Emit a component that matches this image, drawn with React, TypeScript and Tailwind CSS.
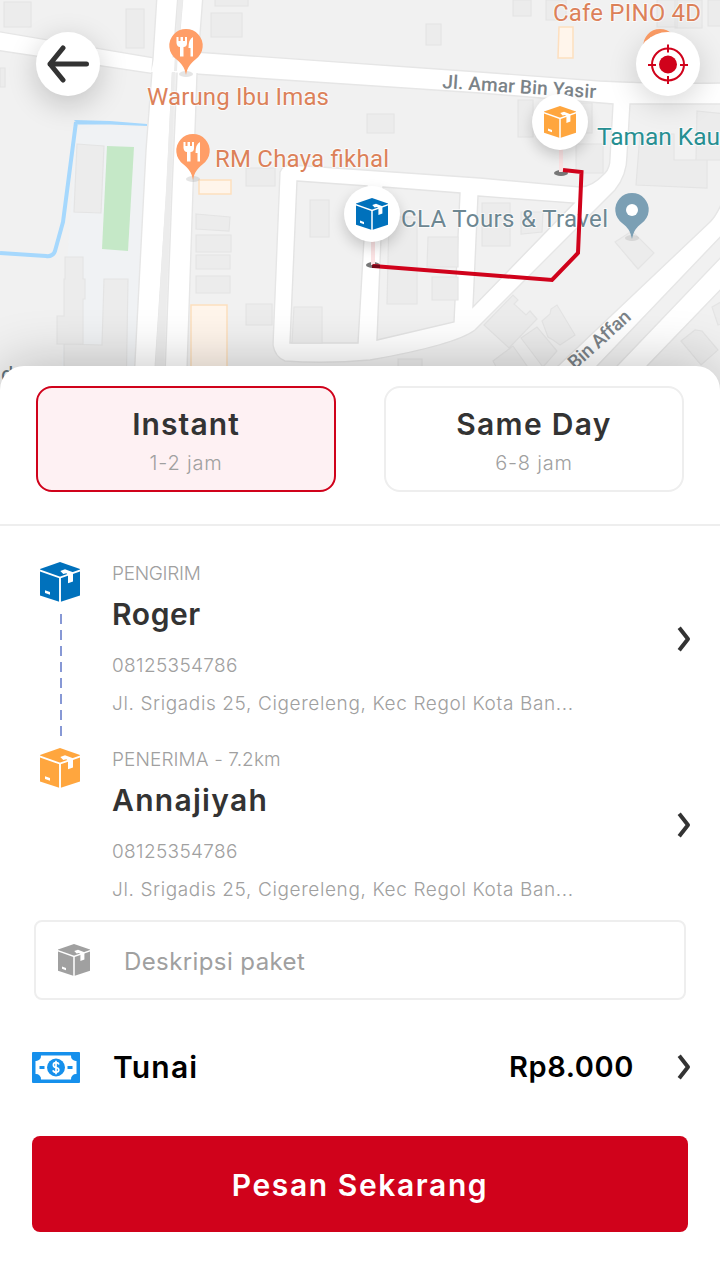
import React from "react";

type IconProps = { className?: string };

function BoxIcon({ className = "" }: IconProps) {
  return (
    <svg viewBox="0 0 40 40" className={className} fill="currentColor">
      <path d="M20 0 40 7V33.400L20 40 0 33.400V7z" />
      <path d="M-.5 8.300 20 15.600 40.500 8.300M20 15.600V41" fill="none" stroke="#fff" strokeWidth="1.900" />
      <path d="M20.300 8.900 25 7.300 33 10.300V19.400L28 21.200V12.500L26.300 11.300 23.300 12z" fill="#fff" />
      <path d="M5 28.200 10 30V32.800L5 31z" fill="#fff" />
    </svg>
  );
}

function Chevron() {
  return (
    <svg viewBox="0 0 14 26" className="h-[26px] w-[14px] shrink-0" fill="none" stroke="#333" strokeWidth="4">
      <path d="M2.200 1.800 11 13 2.200 24.200" strokeLinejoin="round" />
    </svg>
  );
}

function CashIcon() {
  return (
    <svg viewBox="0 0 48 31" className="h-[31px] w-12">
      <rect width="48" height="31" rx="1" fill="#1690ec" />
      <path d="M9 3.500H39A5 5 0 0 0 44.500 9V22A5 5 0 0 0 39 27.500H9A5 5 0 0 0 3.500 22V9A5 5 0 0 0 9 3.500z" fill="#fff" />
      <circle cx="24" cy="15.500" r="9" fill="#1690ec" />
      <path d="M7.500 14h5v3h-5zM35.500 14h5v3h-5z" fill="#1690ec" />
      <path d="M27 12.500C26.500 11 25.500 10.700 24 10.700 20.500 10.700 20.500 15 24 15.500 27.700 16 27.700 20.300 24 20.300 22.300 20.300 21.300 19.600 21 18.300M24 8.800V22.200" fill="none" stroke="#fff" strokeWidth="1.700" />
    </svg>
  );
}

function FoodPin({ x, y }: { x: number; y: number }) {
  return (
    <g transform={`translate(${x} ${y})`}>
      <ellipse cx="0" cy="45" rx="7" ry="3" fill="#999" opacity=".25" />
      <path d="M0 46C-1.500 38-4 35-10 30A16.700 16.700 0 1 1 10 30C4 35 1.500 38 0 46z" fill="#ff9e67" />
      <path d="M-9.500 8V14Q-9 18 -6 18V27.500H-2.500V18Q1 18 1 14V8H-1V12H-3V8H-5.500V12H-7.500V8zM7 8Q2.500 10 2.500 19H4.500V27.500H7z" fill="#fff" />
    </g>
  );
}

function CityMap() {
  return (
    <svg viewBox="0 0 720 400" className="block h-[400px] w-[720px]" fontFamily="Roboto, sans-serif">
      <rect width="720" height="400" fill="#f1f1f1" />
      <path d="M77 124 148 128 133 400H60L68 250z" fill="#f0f2f4" />
      <g fill="#ececec" stroke="#e4e4e4" strokeWidth="1.200">
        <path d="M4 2h27v25H4zM126 9h18v39h-18zM0 68h5v19H0zM215-5h33v11h-33zM211 13h31v24h-31zM426 24h15v21h-15zM367 114h27v19h-27zM246 168h29v18h-29z" />
        <path d="M77 144 104 146 101 213 74 212zM65 257h18v22h2v20h-2v45H57v-28h7v-37h1zM104 279h24l-2 121H64v-56l38 1z" />
        <path d="M196 214 230 217 229 231 196 229zM196 235h35v17h-35zM196 255h34v14h-34zM196 276h34v17h-34z" />
        <path d="M246 304h26v21h-26zM398 359h24v18h-24z" />
        <path d="M513 0h18v16h-18zM546 0h20v20h-20zM657 0h20v27h-20zM675 0h27v28h-27zM708 0h20v26h-20zM518 100h15v37h-15zM576 103h16v30h-16zM576 144h27v29h-27zM697 111 725 114V160H674V134H640L636 185 707 188V160H696z" />
        <path d="M615 242 632 231 654 253 638 269z" />
        <path d="M484 325 513 295 518 300 514 304 526 315 530 311 537 319 509 348zM542 321 550 314 551 309 557 305 575 335 560 345 553 340 548 337zM521 338 537 327 557 351 543 367zM493 361 513 346 527 366 505 384zM681 341 695 330 702 331 718 350 701 365zM712 307 728 298 734 321 718 325z" />
      </g>
      <path d="M107 146 134 147 128 251 102 249z" fill="#c5e8c7" />
      <path d="M0 253 46 256Q53 257 55 251L63 222 76 122" fill="none" stroke="#a6d8fd" strokeWidth="4" strokeLinejoin="round" />
      <path d="M74 120 110 121 147 124V126L110 124.500 78 124.500z" fill="#a6d8fd" />
      <g fill="#fff5eb" stroke="#fddfbf" strokeWidth="1.500">
        <path d="M199 180h32v14h-32zM191 305h36v85h-36zM559 27h14v31h-15z" />
      </g>
      <g fill="#fff" stroke="#e6e6e6" strokeWidth="1.400">
        <path d="M-5 31 155 58V74L-5 50z" />
        <path d="M195 52 480 72 600 81Q660 84 725 83V104H630L627 156Q627 175 615 190L475 330Q455 345 370 360 325 364 285 361 275 357 273 345L280 172Q282 165 292 165L480 178 580 187Q592 187 605 173 610 168 610 158L613 104 480 93 195 74z" />
        <path d="M157-5 153 58 146 150 133 400H153L167 190 173 60 178-5zM183-5 178 52 172 190 164 400H186L193 190 197 74 203-5z" />
        <path d="M558 366 710 222Q718 214 725 195V232L597 366 560 405H520zM617 366 725 253V285L647 366 610 402H580z" />
      </g>
      <path d="M154 60 199 54V73L151 72z" fill="#fff" />
      <path d="M178 0H183L178 52 177 71H174zM175 72 171 190 164 370H155L166 190 172 72z" fill="#ececec" />
      <g fill="#f1f1f1" stroke="#e4e4e4" strokeWidth="1.400">
        <path d="M297 181 367 186 358 343H290z" />
        <path d="M383 187 460 193 454 322 377 340z" />
        <path d="M478 196 574 203 473 307z" />
      </g>
      <g fill="#ececec" stroke="#e4e4e4" strokeWidth="1.200">
        <path d="M310 200h19v37h-19zM294 307h28v36h-30zM389 217h28v87h-30zM428 237h30v30h-31zM432 277h26v23h-26zM482 203h28v43h-28zM521 212h22l-1 20-21 2z" />
      </g>
      <g fontSize="24" fill="#dc8159" stroke="#fff" strokeOpacity=".7" strokeWidth="2" paintOrder="stroke" strokeLinejoin="round">
        <text x="147" y="105" textLength="182">Warung Ibu Imas</text>
        <text x="215" y="167" textLength="174">RM Chaya fikhal</text>
        <text x="553" y="21" textLength="148">Cafe PINO 4D</text>
        <text x="597" y="145" fill="#268f92" fontSize="24.500" textLength="123">Taman Kau</text>
        <text x="401" y="227" fill="#6d8792" textLength="207">CLA Tours &amp; Travel</text>
      </g>
      <g fill="#7b8388" fontSize="19" fontWeight="500">
        <text transform="translate(442 88) rotate(3.800)" textLength="154">Jl. Amar Bin Yasir</text>
        <text transform="translate(575 370) rotate(-42)" textLength="77">Bin Affan</text>
        <text x="1" y="382" fontSize="22" fontWeight="400" fill="#60737c">d d T</text>
      </g>
      <FoodPin x={186} y={29} />
      <FoodPin x={193} y={134} />
      <FoodPin x={660} y={29} />
      <ellipse cx="632" cy="238" rx="7" ry="3" fill="#999" opacity=".25" />
      <path d="M632 239C630 230 628 228 622 223A16.700 16.700 0 1 1 642 223C636 228 634 230 632 239z" fill="#7b9fb4" />
      <circle cx="632" cy="210" r="6" fill="#fff" />
      <ellipse cx="561" cy="173" rx="7" ry="3" fill="#777" />
      <ellipse cx="373" cy="265" rx="7" ry="3" fill="#777" />
      <path d="M559 148h4v24h-4zM371 241h4v24h-4z" fill="#fbe3e4" />
      <path d="M563 170 581.500 172 578 253 552 280 373 266" fill="none" stroke="#d0021b" strokeWidth="4" />
      <path d="M372 264.500 380 265V268H372z" fill="#740818" />
    </svg>
  );
}

function ServiceOption({ title, time, active = false }: { title: string; time: string; active?: boolean }) {
  return (
    <button
      className={`flex h-[106px] w-[300px] flex-col items-center rounded-[16px] border-2 pt-[18px] ${
        active ? "border-[#d0021b] bg-[#fef1f3]" : "border-[#eee] bg-white"
      }`}
    >
      <span className={`text-[30px] leading-[36px] font-semibold text-[#333] ${active ? "tracking-[1.1px]" : "tracking-[1.3px]"}`}>{title}</span>
      <span className="mt-[6px] text-[20px] leading-[30px] font-light tracking-[0.8px] text-[#a0a0a0]">{time}</span>
    </button>
  );
}

type ContactProps = { label: string; labelClass: string; name: string; nameClass: string; color: string; linked?: boolean };

function Contact({ label, labelClass, name, nameClass, color, linked = false }: ContactProps) {
  return (
    <div className="flex h-[186px] pr-[29px] pl-10">
      <div className="flex w-[72px] shrink-0 flex-col">
        <BoxIcon className={`h-10 w-10 ${color}`} />
        {linked && (
          <svg viewBox="0 0 2 122" className="mt-3 ml-5 h-[122px] w-[2px]">
            <path d="M1 0V122" stroke="#8798d5" strokeWidth="2" strokeDasharray="10 6" />
          </svg>
        )}
      </div>
      <div className="w-[490px] whitespace-nowrap text-[#a0a0a0]">
        <div className={`h-[30px] text-[19px] leading-[24px] font-light ${labelClass}`}>{label}</div>
        <div className={`h-[58px] text-[30px] leading-[44px] font-semibold text-[#333] ${nameClass}`}>{name}</div>
        <div className="h-[38px] text-[19px] leading-[32px] font-light tracking-[0.35px]">08125354786</div>
        <div className="text-[19px] leading-[32px] font-light tracking-[0.62px]">Jl. Srigadis 25, Cigereleng, Kec Regol Kota Ban...</div>
      </div>
      <div className="ml-auto pt-16">
        <Chevron />
      </div>
    </div>
  );
}

export default function App() {
  return (
    <main className="relative h-[1280px] w-[720px] overflow-hidden bg-white font-['Inter',sans-serif]">
      <div className="relative h-[366px]">
        <CityMap />
        <button className="absolute top-8 left-9 flex h-16 w-16 items-center justify-center rounded-full bg-white shadow-[0_8px_30px_rgba(0,0,0,0.2)]">
          <svg viewBox="0 0 44 38" className="h-[38px] w-11" fill="none" stroke="#333" strokeWidth="5" strokeLinecap="round" strokeLinejoin="round">
            <path d="M40.500 19H4M17 3 4 19 17 35" />
          </svg>
        </button>
        <button className="absolute top-8 left-[636px] flex h-16 w-16 items-center justify-center rounded-full bg-white shadow-[0_8px_30px_rgba(0,0,0,0.16)]">
          <svg viewBox="0 0 40 40" className="h-10 w-10" fill="none" stroke="#d0021b" strokeWidth="2">
            <circle cx="20" cy="20.500" r="16" />
            <circle cx="20" cy="20.500" r="9" fill="#d0021b" stroke="none" />
            <path d="M20 .5v8M20 32v8M0 21h8M32 21h8" />
          </svg>
        </button>
        <div className="absolute top-[94px] left-[532px] flex h-14 w-14 items-center justify-center rounded-full bg-white text-[#ffa63e] shadow-[0_6px_14px_rgba(0,0,0,0.18)]">
          <BoxIcon className="h-8 w-8" />
        </div>
        <div className="absolute top-[186px] left-[344px] flex h-14 w-14 items-center justify-center rounded-full bg-white text-[#0071bc] shadow-[0_6px_14px_rgba(0,0,0,0.18)]">
          <BoxIcon className="h-8 w-8" />
        </div>
      </div>

      <section className="relative h-[914px] rounded-t-[24px] bg-white shadow-[0_0_56px_rgba(0,0,0,0.24)]">
        <div className="flex h-[160px] justify-between border-b-2 border-[#eee] px-9 pt-5">
          <ServiceOption title="Instant" time="1-2 jam" active />
          <ServiceOption title="Same Day" time="6-8 jam" />
        </div>
        <div className="pt-9">
          <Contact label="PENGIRIM" labelClass="tracking-[-0.3px]" name="Roger" nameClass="tracking-[0.6px]" color="text-[#0071bc]" linked />
          <Contact label="PENERIMA - 7.2km" labelClass="tracking-[0.1px]" name="Annajiyah" nameClass="tracking-[1.3px]" color="text-[#ffa63e]" />
        </div>
        <div className="mx-[34px] -mt-[14px] flex h-20 items-center rounded-lg border-2 border-[#eee] pl-[22px] text-[#a0a0a0]">
          <BoxIcon className="h-8 w-8" />
          <span className="ml-[34px] pt-1 text-[24px] leading-8 tracking-[0.4px]">Deskripsi paket</span>
        </div>
        <div className="flex h-[134px] items-center pr-[29px] pl-8 text-black">
          <CashIcon />
          <span className="ml-[33px] text-[30px] font-semibold tracking-[1.2px]">Tunai</span>
          <span className="mr-[43px] ml-auto text-[29px] font-semibold tracking-[0.6px]">Rp8.000</span>
          <Chevron />
        </div>
        <button className="mx-8 mt-[2px] flex h-24 w-[656px] items-center justify-center rounded-lg bg-[#d0021b] pt-[3px] text-[30px] font-semibold tracking-[1.600px] text-white">
          Pesan Sekarang
        </button>
      </section>
    </main>
  );
}
